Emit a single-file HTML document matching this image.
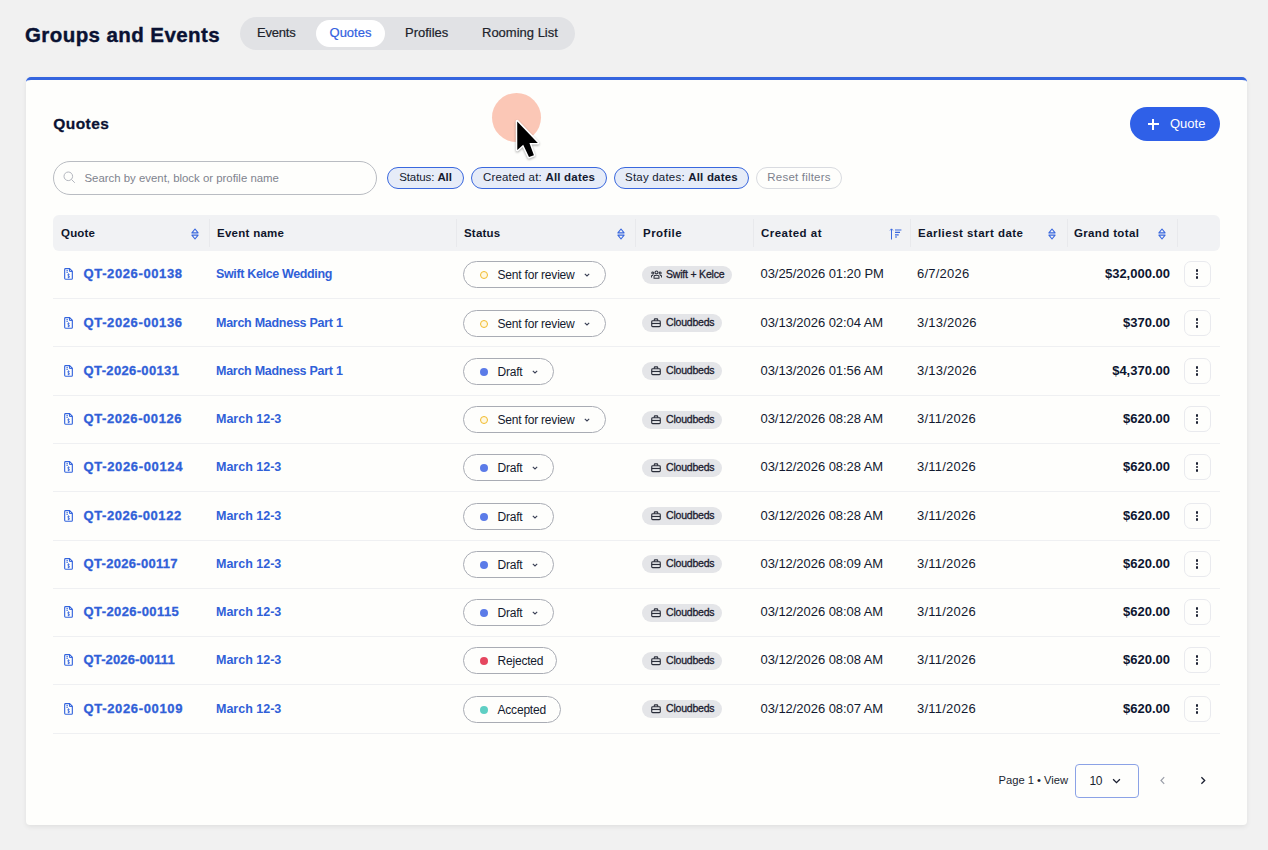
<!DOCTYPE html>
<html lang="en"><head><meta charset="utf-8"><title>Groups and Events - Quotes</title>
<style>
*{box-sizing:border-box;margin:0;padding:0}
html,body{width:1268px;height:850px;overflow:hidden}
body{background:#f1f1f1;font-family:"Liberation Sans",sans-serif;color:#0c1530;position:relative}
.abs{position:absolute;white-space:nowrap}
h1{position:absolute;left:25px;top:20px;font-size:20.5px;line-height:30px;font-weight:700;letter-spacing:.42px;-webkit-text-stroke:.4px #0a1233;color:#0a1233;white-space:nowrap}
.tabs{position:absolute;left:240px;top:17px;width:335px;height:33px;border-radius:17px;background:#e1e2e5}
.tabs span{position:absolute;top:0;height:33px;line-height:32px;font-size:13px;color:#20232b;white-space:nowrap;-webkit-text-stroke:.2px currentColor}
.tabs .on{left:76px;top:3px;width:69px;height:27px;line-height:26px;border-radius:14px;background:#fff;color:#3361df;text-align:center}
.card{position:absolute;left:26px;top:77px;width:1221px;height:748px;background:#fefefc;border-radius:5px 5px 4px 4px;border-top:3px solid #3565df;box-shadow:0 2px 5px rgba(0,0,0,.07)}
h2{position:absolute;left:53.3px;top:113.5px;font-size:15.5px;line-height:20px;font-weight:700;color:#0a1233;letter-spacing:.42px;-webkit-text-stroke:.3px #0a1233}
.btn{position:absolute;left:1130px;top:107px;width:90px;height:34px;border-radius:17px;background:#2f60e8;color:#fff;font-size:13px;line-height:34px}
.btn b{position:absolute;left:17.5px;top:11.5px;width:11px;height:11px}
.btn b:before{content:"";position:absolute;left:0;top:4.6px;width:11px;height:1.8px;background:#fff}
.btn b:after{content:"";position:absolute;left:4.6px;top:0;width:1.8px;height:11px;background:#fff}
.btn span{position:absolute;left:40px;top:0}
.search{position:absolute;left:53px;top:161px;width:324px;height:34px;border-radius:17px;border:1px solid #b9bcc2;background:#fefefc}
.search span{position:absolute;left:30.5px;top:1px;line-height:31px;font-size:11.4px;color:#7e838e}
.search svg{position:absolute;left:9.2px;top:9.1px}
.chip{position:absolute;top:166.5px;height:22.5px;border-radius:12px;border:1px solid #3a68de;background:#e6ecf8;font-size:11.5px;letter-spacing:.2px;line-height:19.5px;color:#141a30;text-align:center;white-space:nowrap}
.chip b{font-weight:700}
.chip.off{border-color:#d9dbe0;background:#fefefc;color:#7d828d}
.thead{position:absolute;left:53px;top:215px;width:1167px;height:35.7px;background:#f1f2f4;border-radius:6px}
.thead span{position:absolute;top:1px;line-height:35px;font-size:11.5px;font-weight:700;letter-spacing:.2px;color:#10162c;white-space:nowrap}
.thead i{position:absolute;top:4px;width:1px;height:28px;background:#e8e9ec}
.thead svg{position:absolute;top:12.5px}
.row{position:absolute;left:53px;width:1167px;height:48px}
.sep{position:absolute;left:53px;width:1167px;height:1px;background:#eff0f2}
.row>*{position:absolute;white-space:nowrap}
.qi{left:11px;top:18.1px}
.q{left:30.6px;top:14px;line-height:20px;font-size:13px;font-weight:700;color:#3060d8;-webkit-text-stroke:.3px #3060d8;letter-spacing:.62px}
.ev{left:163px;top:14px;line-height:20px;font-size:12.5px;font-weight:700;color:#3060d8;letter-spacing:-.3px}
.st{left:410px;top:11px;height:27px;border:1px solid #a9acb4;border-radius:14px;background:#fefefc}
.st>*{position:absolute}
.dot{left:16px;top:9px;width:8px;height:8px;border-radius:50%}
.dot.ring{border:1.5px solid #f2bb2e;background:#fff8e0}
.stl{left:33.5px;top:0;line-height:26px;font-size:12px;letter-spacing:-.2px;color:#141a2e}
.caret{right:15px;top:11px}
.pf{left:589px;top:15px;letter-spacing:-.2px;height:18px;border-radius:9px;background:#e4e5e8;font-size:10.5px;font-weight:400;color:#1c2030}
.pf>*{position:absolute}
.pf .pi{left:8.5px;top:4px}
.pf span{left:24px;top:-1px;line-height:18px;-webkit-text-stroke:.3px #1c2030}
.cr{left:707.5px;top:14px;line-height:20px;font-size:13px;letter-spacing:-.05px;color:#131a30}
.sd{left:864px;top:14px;line-height:20px;font-size:13px;letter-spacing:.22px;color:#131a30}
.gt{right:50px;top:14px;line-height:20px;font-size:13px;font-weight:700;color:#0c1530}
.act{left:1131px;top:11px;width:26.6px;height:26px;border:1px solid #e9eaee;border-radius:7px;background:#fefefc}
.act i{position:absolute;left:11.3px;width:2.2px;height:2.2px;border-radius:50%;background:#1a1f30}
.act i:nth-child(1){top:7.4px}.act i:nth-child(2){top:10.9px}.act i:nth-child(3){top:14.4px}
.pg{position:absolute;left:998.5px;top:770px;font-size:11.2px;line-height:20px;color:#1a1f30;white-space:nowrap}
.sel{position:absolute;left:1075px;top:764px;width:64px;height:34px;border:1px solid #8ba2e6;border-radius:4px;background:#fefefc}
.sel span{position:absolute;left:13.5px;top:0;line-height:32px;font-size:12px;letter-spacing:-.3px;color:#1a1f30}
.sel svg{position:absolute;left:36px;top:12.5px}
.cursor{position:absolute;left:492px;top:92.5px;width:49px;height:49px;border-radius:50%;background:#fbc7b6}
</style></head><body>
<h1>Groups and Events</h1>
<div class="tabs"><span style="left:17px;letter-spacing:-.2px">Events</span><span class="on">Quotes</span><span style="left:165px">Profiles</span><span style="left:242px">Rooming List</span></div>
<div class="card"></div>
<h2>Quotes</h2>
<div class="btn"><b></b><span>Quote</span></div>
<div class="search"><svg width="13" height="13" viewBox="0 0 13 13"><circle cx="5.3" cy="5.3" r="4.3" fill="none" stroke="#b3b6be" stroke-width="1"/><path d="M8.4 8.4 L11.8 11.8" stroke="#b3b6be" stroke-width="1"/></svg><span>Search by event, block or profile name</span></div>
<div class="chip" style="left:387px;width:77px;letter-spacing:-.1px">Status: <b>All</b></div>
<div class="chip" style="left:471px;width:136px">Created at: <b>All dates</b></div>
<div class="chip" style="left:614px;width:135px">Stay dates: <b>All dates</b></div>
<div class="chip off" style="left:756px;width:86px">Reset filters</div>
<div class="thead">
<span style="left:8px">Quote</span><span style="left:164px;letter-spacing:0.27px">Event name</span><span style="left:411px">Status</span><span style="left:590px;letter-spacing:0.47px">Profile</span><span style="left:708px;letter-spacing:0.47px">Created at</span><span style="left:865px;letter-spacing:0.47px">Earliest start date</span><span style="left:1021px;letter-spacing:0.35px">Grand total</span>
<i style="left:156px"></i><i style="left:403px"></i><i style="left:582px"></i><i style="left:700px"></i><i style="left:857px"></i><i style="left:1014px"></i><i style="left:1124px"></i>
<svg style="left:137.5px" width="8" height="12" viewBox="0 0 8 12"><g fill="none" stroke="#3a68de" stroke-width="1.1" stroke-linejoin="round"><path d="M0.9 4.9 L4 1 L7.1 4.9 Z"/><path d="M0.9 7.1 L4 11 L7.1 7.1 Z"/></g></svg><svg style="left:563.5px" width="8" height="12" viewBox="0 0 8 12"><g fill="none" stroke="#3a68de" stroke-width="1.1" stroke-linejoin="round"><path d="M0.9 4.9 L4 1 L7.1 4.9 Z"/><path d="M0.9 7.1 L4 11 L7.1 7.1 Z"/></g></svg><svg style="left:994.5px" width="8" height="12" viewBox="0 0 8 12"><g fill="none" stroke="#3a68de" stroke-width="1.1" stroke-linejoin="round"><path d="M0.9 4.9 L4 1 L7.1 4.9 Z"/><path d="M0.9 7.1 L4 11 L7.1 7.1 Z"/></g></svg><svg style="left:1104.5px" width="8" height="12" viewBox="0 0 8 12"><g fill="none" stroke="#3a68de" stroke-width="1.1" stroke-linejoin="round"><path d="M0.9 4.9 L4 1 L7.1 4.9 Z"/><path d="M0.9 7.1 L4 11 L7.1 7.1 Z"/></g></svg><svg style="left:836px" width="14" height="12" viewBox="0 0 14 12"><g fill="none" stroke="#3a68de"><path d="M2.5 11.5 V0.9 M1.1 2.4 L2.5 0.9 L3.9 2.4" stroke-width="1"/><path d="M6 2 H12.4 M6 4.3 H11 M6 6.9 H9.7 M6 9 H8" stroke-width="1.2"/></g></svg>
</div>
<div class="row" style="top:250px">
<svg class="qi" width="9" height="11.8" viewBox="0 0 9 12"><g fill="none" stroke="#3364dd"><path d="M1.5 0.6 H5.6 L8.4 3.4 V10.6 Q8.4 11.4 7.6 11.4 H1.5 Q0.6 11.4 0.6 10.5 V1.5 Q0.6 0.6 1.5 0.6 Z" stroke-width="1.15"/><path d="M5.5 0.9 V3.5 H8.1" stroke-width="1"/><path d="M2.3 2.7 H4 M2.3 4.4 H4" stroke-width=".9"/><path d="M5.6 6.7 Q4.6 5.9 3.8 6.6 Q3.3 7.5 4.6 8 Q6 8.5 5.4 9.4 Q4.6 10 3.6 9.3 M4.6 5.5 V10.4" stroke-width=".8"/></g></svg>
<span class="q" style="letter-spacing:0.61px">QT-2026-00138</span><span class="ev" style="letter-spacing:-0.35px">Swift Kelce Wedding</span>
<span class="st" style="width:143px"><i class="dot ring"></i><span class="stl">Sent for review</span><svg class="caret" width="6" height="4" viewBox="0 0 6 4"><path d="M0.8 0.8 L3 3 L5.2 0.8" fill="none" stroke="#3a4055" stroke-width="1.1"/></svg></span>
<span class="pf" style="width:90px;top:16px"><svg class="pi" width="11" height="9.2" viewBox="0 0 12 10"><g fill="none" stroke="#2a2e3a" stroke-width="1.1"><circle cx="6" cy="2.6" r="1.6"/><circle cx="2" cy="3.2" r="1.1"/><circle cx="10" cy="3.2" r="1.1"/><path d="M3.3 9 V7.2 Q3.3 5.6 6 5.6 Q8.7 5.6 8.7 7.2 V9 Z"/><path d="M0.5 8.2 V6.6 Q0.5 5.6 2.4 5.6 M11.5 8.2 V6.6 Q11.5 5.6 9.6 5.6"/></g></svg><span>Swift + Kelce</span></span>
<span class="cr">03/25/2026 01:20 PM</span><span class="sd">6/7/2026</span><span class="gt">$32,000.00</span>
<span class="act"><i></i><i></i><i></i></span>
</div>
<div class="row" style="top:299px">
<svg class="qi" width="9" height="11.8" viewBox="0 0 9 12"><g fill="none" stroke="#3364dd"><path d="M1.5 0.6 H5.6 L8.4 3.4 V10.6 Q8.4 11.4 7.6 11.4 H1.5 Q0.6 11.4 0.6 10.5 V1.5 Q0.6 0.6 1.5 0.6 Z" stroke-width="1.15"/><path d="M5.5 0.9 V3.5 H8.1" stroke-width="1"/><path d="M2.3 2.7 H4 M2.3 4.4 H4" stroke-width=".9"/><path d="M5.6 6.7 Q4.6 5.9 3.8 6.6 Q3.3 7.5 4.6 8 Q6 8.5 5.4 9.4 Q4.6 10 3.6 9.3 M4.6 5.5 V10.4" stroke-width=".8"/></g></svg>
<span class="q" style="letter-spacing:0.61px">QT-2026-00136</span><span class="ev" style="letter-spacing:-0.27px">March Madness Part 1</span>
<span class="st" style="width:143px"><i class="dot ring"></i><span class="stl">Sent for review</span><svg class="caret" width="6" height="4" viewBox="0 0 6 4"><path d="M0.8 0.8 L3 3 L5.2 0.8" fill="none" stroke="#3a4055" stroke-width="1.1"/></svg></span>
<span class="pf" style="width:80px;top:15px"><svg class="pi" width="10" height="9.5" viewBox="0 0 11 10"><g fill="none" stroke="#2a2e3a" stroke-width="1.25"><rect x="0.8" y="2.8" width="9.4" height="6.4" rx="1"/><path d="M3.6 2.8 V1.6 Q3.6 0.8 4.4 0.8 H6.6 Q7.4 0.8 7.4 1.6 V2.8"/><path d="M0.8 5.8 H10.2"/></g></svg><span>Cloudbeds</span></span>
<span class="cr">03/13/2026 02:04 AM</span><span class="sd">3/13/2026</span><span class="gt">$370.00</span>
<span class="act"><i></i><i></i><i></i></span>
</div>
<div class="row" style="top:347px">
<svg class="qi" width="9" height="11.8" viewBox="0 0 9 12"><g fill="none" stroke="#3364dd"><path d="M1.5 0.6 H5.6 L8.4 3.4 V10.6 Q8.4 11.4 7.6 11.4 H1.5 Q0.6 11.4 0.6 10.5 V1.5 Q0.6 0.6 1.5 0.6 Z" stroke-width="1.15"/><path d="M5.5 0.9 V3.5 H8.1" stroke-width="1"/><path d="M2.3 2.7 H4 M2.3 4.4 H4" stroke-width=".9"/><path d="M5.6 6.7 Q4.6 5.9 3.8 6.6 Q3.3 7.5 4.6 8 Q6 8.5 5.4 9.4 Q4.6 10 3.6 9.3 M4.6 5.5 V10.4" stroke-width=".8"/></g></svg>
<span class="q" style="letter-spacing:0.35px">QT-2026-00131</span><span class="ev" style="letter-spacing:-0.27px">March Madness Part 1</span>
<span class="st" style="width:91px"><i class="dot" style="background:#5b7be8"></i><span class="stl">Draft</span><svg class="caret" width="6" height="4" viewBox="0 0 6 4"><path d="M0.8 0.8 L3 3 L5.2 0.8" fill="none" stroke="#3a4055" stroke-width="1.1"/></svg></span>
<span class="pf" style="width:80px;top:15px"><svg class="pi" width="10" height="9.5" viewBox="0 0 11 10"><g fill="none" stroke="#2a2e3a" stroke-width="1.25"><rect x="0.8" y="2.8" width="9.4" height="6.4" rx="1"/><path d="M3.6 2.8 V1.6 Q3.6 0.8 4.4 0.8 H6.6 Q7.4 0.8 7.4 1.6 V2.8"/><path d="M0.8 5.8 H10.2"/></g></svg><span>Cloudbeds</span></span>
<span class="cr">03/13/2026 01:56 AM</span><span class="sd">3/13/2026</span><span class="gt">$4,370.00</span>
<span class="act"><i></i><i></i><i></i></span>
</div>
<div class="row" style="top:395px">
<svg class="qi" width="9" height="11.8" viewBox="0 0 9 12"><g fill="none" stroke="#3364dd"><path d="M1.5 0.6 H5.6 L8.4 3.4 V10.6 Q8.4 11.4 7.6 11.4 H1.5 Q0.6 11.4 0.6 10.5 V1.5 Q0.6 0.6 1.5 0.6 Z" stroke-width="1.15"/><path d="M5.5 0.9 V3.5 H8.1" stroke-width="1"/><path d="M2.3 2.7 H4 M2.3 4.4 H4" stroke-width=".9"/><path d="M5.6 6.7 Q4.6 5.9 3.8 6.6 Q3.3 7.5 4.6 8 Q6 8.5 5.4 9.4 Q4.6 10 3.6 9.3 M4.6 5.5 V10.4" stroke-width=".8"/></g></svg>
<span class="q" style="letter-spacing:0.57px">QT-2026-00126</span><span class="ev" style="letter-spacing:0px">March 12-3</span>
<span class="st" style="width:143px"><i class="dot ring"></i><span class="stl">Sent for review</span><svg class="caret" width="6" height="4" viewBox="0 0 6 4"><path d="M0.8 0.8 L3 3 L5.2 0.8" fill="none" stroke="#3a4055" stroke-width="1.1"/></svg></span>
<span class="pf" style="width:80px;top:16px"><svg class="pi" width="10" height="9.5" viewBox="0 0 11 10"><g fill="none" stroke="#2a2e3a" stroke-width="1.25"><rect x="0.8" y="2.8" width="9.4" height="6.4" rx="1"/><path d="M3.6 2.8 V1.6 Q3.6 0.8 4.4 0.8 H6.6 Q7.4 0.8 7.4 1.6 V2.8"/><path d="M0.8 5.8 H10.2"/></g></svg><span>Cloudbeds</span></span>
<span class="cr">03/12/2026 08:28 AM</span><span class="sd">3/11/2026</span><span class="gt">$620.00</span>
<span class="act"><i></i><i></i><i></i></span>
</div>
<div class="row" style="top:443px">
<svg class="qi" width="9" height="11.8" viewBox="0 0 9 12"><g fill="none" stroke="#3364dd"><path d="M1.5 0.6 H5.6 L8.4 3.4 V10.6 Q8.4 11.4 7.6 11.4 H1.5 Q0.6 11.4 0.6 10.5 V1.5 Q0.6 0.6 1.5 0.6 Z" stroke-width="1.15"/><path d="M5.5 0.9 V3.5 H8.1" stroke-width="1"/><path d="M2.3 2.7 H4 M2.3 4.4 H4" stroke-width=".9"/><path d="M5.6 6.7 Q4.6 5.9 3.8 6.6 Q3.3 7.5 4.6 8 Q6 8.5 5.4 9.4 Q4.6 10 3.6 9.3 M4.6 5.5 V10.4" stroke-width=".8"/></g></svg>
<span class="q" style="letter-spacing:0.65px">QT-2026-00124</span><span class="ev" style="letter-spacing:0px">March 12-3</span>
<span class="st" style="width:91px"><i class="dot" style="background:#5b7be8"></i><span class="stl">Draft</span><svg class="caret" width="6" height="4" viewBox="0 0 6 4"><path d="M0.8 0.8 L3 3 L5.2 0.8" fill="none" stroke="#3a4055" stroke-width="1.1"/></svg></span>
<span class="pf" style="width:80px;top:16px"><svg class="pi" width="10" height="9.5" viewBox="0 0 11 10"><g fill="none" stroke="#2a2e3a" stroke-width="1.25"><rect x="0.8" y="2.8" width="9.4" height="6.4" rx="1"/><path d="M3.6 2.8 V1.6 Q3.6 0.8 4.4 0.8 H6.6 Q7.4 0.8 7.4 1.6 V2.8"/><path d="M0.8 5.8 H10.2"/></g></svg><span>Cloudbeds</span></span>
<span class="cr">03/12/2026 08:28 AM</span><span class="sd">3/11/2026</span><span class="gt">$620.00</span>
<span class="act"><i></i><i></i><i></i></span>
</div>
<div class="row" style="top:492px">
<svg class="qi" width="9" height="11.8" viewBox="0 0 9 12"><g fill="none" stroke="#3364dd"><path d="M1.5 0.6 H5.6 L8.4 3.4 V10.6 Q8.4 11.4 7.6 11.4 H1.5 Q0.6 11.4 0.6 10.5 V1.5 Q0.6 0.6 1.5 0.6 Z" stroke-width="1.15"/><path d="M5.5 0.9 V3.5 H8.1" stroke-width="1"/><path d="M2.3 2.7 H4 M2.3 4.4 H4" stroke-width=".9"/><path d="M5.6 6.7 Q4.6 5.9 3.8 6.6 Q3.3 7.5 4.6 8 Q6 8.5 5.4 9.4 Q4.6 10 3.6 9.3 M4.6 5.5 V10.4" stroke-width=".8"/></g></svg>
<span class="q" style="letter-spacing:0.54px">QT-2026-00122</span><span class="ev" style="letter-spacing:0px">March 12-3</span>
<span class="st" style="width:91px"><i class="dot" style="background:#5b7be8"></i><span class="stl">Draft</span><svg class="caret" width="6" height="4" viewBox="0 0 6 4"><path d="M0.8 0.8 L3 3 L5.2 0.8" fill="none" stroke="#3a4055" stroke-width="1.1"/></svg></span>
<span class="pf" style="width:80px;top:15px"><svg class="pi" width="10" height="9.5" viewBox="0 0 11 10"><g fill="none" stroke="#2a2e3a" stroke-width="1.25"><rect x="0.8" y="2.8" width="9.4" height="6.4" rx="1"/><path d="M3.6 2.8 V1.6 Q3.6 0.8 4.4 0.8 H6.6 Q7.4 0.8 7.4 1.6 V2.8"/><path d="M0.8 5.8 H10.2"/></g></svg><span>Cloudbeds</span></span>
<span class="cr">03/12/2026 08:28 AM</span><span class="sd">3/11/2026</span><span class="gt">$620.00</span>
<span class="act"><i></i><i></i><i></i></span>
</div>
<div class="row" style="top:540px">
<svg class="qi" width="9" height="11.8" viewBox="0 0 9 12"><g fill="none" stroke="#3364dd"><path d="M1.5 0.6 H5.6 L8.4 3.4 V10.6 Q8.4 11.4 7.6 11.4 H1.5 Q0.6 11.4 0.6 10.5 V1.5 Q0.6 0.6 1.5 0.6 Z" stroke-width="1.15"/><path d="M5.5 0.9 V3.5 H8.1" stroke-width="1"/><path d="M2.3 2.7 H4 M2.3 4.4 H4" stroke-width=".9"/><path d="M5.6 6.7 Q4.6 5.9 3.8 6.6 Q3.3 7.5 4.6 8 Q6 8.5 5.4 9.4 Q4.6 10 3.6 9.3 M4.6 5.5 V10.4" stroke-width=".8"/></g></svg>
<span class="q" style="letter-spacing:0.30px">QT-2026-00117</span><span class="ev" style="letter-spacing:0px">March 12-3</span>
<span class="st" style="width:91px"><i class="dot" style="background:#5b7be8"></i><span class="stl">Draft</span><svg class="caret" width="6" height="4" viewBox="0 0 6 4"><path d="M0.8 0.8 L3 3 L5.2 0.8" fill="none" stroke="#3a4055" stroke-width="1.1"/></svg></span>
<span class="pf" style="width:80px;top:15px"><svg class="pi" width="10" height="9.5" viewBox="0 0 11 10"><g fill="none" stroke="#2a2e3a" stroke-width="1.25"><rect x="0.8" y="2.8" width="9.4" height="6.4" rx="1"/><path d="M3.6 2.8 V1.6 Q3.6 0.8 4.4 0.8 H6.6 Q7.4 0.8 7.4 1.6 V2.8"/><path d="M0.8 5.8 H10.2"/></g></svg><span>Cloudbeds</span></span>
<span class="cr">03/12/2026 08:09 AM</span><span class="sd">3/11/2026</span><span class="gt">$620.00</span>
<span class="act"><i></i><i></i><i></i></span>
</div>
<div class="row" style="top:588px">
<svg class="qi" width="9" height="11.8" viewBox="0 0 9 12"><g fill="none" stroke="#3364dd"><path d="M1.5 0.6 H5.6 L8.4 3.4 V10.6 Q8.4 11.4 7.6 11.4 H1.5 Q0.6 11.4 0.6 10.5 V1.5 Q0.6 0.6 1.5 0.6 Z" stroke-width="1.15"/><path d="M5.5 0.9 V3.5 H8.1" stroke-width="1"/><path d="M2.3 2.7 H4 M2.3 4.4 H4" stroke-width=".9"/><path d="M5.6 6.7 Q4.6 5.9 3.8 6.6 Q3.3 7.5 4.6 8 Q6 8.5 5.4 9.4 Q4.6 10 3.6 9.3 M4.6 5.5 V10.4" stroke-width=".8"/></g></svg>
<span class="q" style="letter-spacing:0.40px">QT-2026-00115</span><span class="ev" style="letter-spacing:0px">March 12-3</span>
<span class="st" style="width:91px"><i class="dot" style="background:#5b7be8"></i><span class="stl">Draft</span><svg class="caret" width="6" height="4" viewBox="0 0 6 4"><path d="M0.8 0.8 L3 3 L5.2 0.8" fill="none" stroke="#3a4055" stroke-width="1.1"/></svg></span>
<span class="pf" style="width:80px;top:16px"><svg class="pi" width="10" height="9.5" viewBox="0 0 11 10"><g fill="none" stroke="#2a2e3a" stroke-width="1.25"><rect x="0.8" y="2.8" width="9.4" height="6.4" rx="1"/><path d="M3.6 2.8 V1.6 Q3.6 0.8 4.4 0.8 H6.6 Q7.4 0.8 7.4 1.6 V2.8"/><path d="M0.8 5.8 H10.2"/></g></svg><span>Cloudbeds</span></span>
<span class="cr">03/12/2026 08:08 AM</span><span class="sd">3/11/2026</span><span class="gt">$620.00</span>
<span class="act"><i></i><i></i><i></i></span>
</div>
<div class="row" style="top:636px">
<svg class="qi" width="9" height="11.8" viewBox="0 0 9 12"><g fill="none" stroke="#3364dd"><path d="M1.5 0.6 H5.6 L8.4 3.4 V10.6 Q8.4 11.4 7.6 11.4 H1.5 Q0.6 11.4 0.6 10.5 V1.5 Q0.6 0.6 1.5 0.6 Z" stroke-width="1.15"/><path d="M5.5 0.9 V3.5 H8.1" stroke-width="1"/><path d="M2.3 2.7 H4 M2.3 4.4 H4" stroke-width=".9"/><path d="M5.6 6.7 Q4.6 5.9 3.8 6.6 Q3.3 7.5 4.6 8 Q6 8.5 5.4 9.4 Q4.6 10 3.6 9.3 M4.6 5.5 V10.4" stroke-width=".8"/></g></svg>
<span class="q" style="letter-spacing:0.12px">QT-2026-00111</span><span class="ev" style="letter-spacing:0px">March 12-3</span>
<span class="st" style="width:94px"><i class="dot" style="background:#e5475f"></i><span class="stl">Rejected</span></span>
<span class="pf" style="width:80px;top:16px"><svg class="pi" width="10" height="9.5" viewBox="0 0 11 10"><g fill="none" stroke="#2a2e3a" stroke-width="1.25"><rect x="0.8" y="2.8" width="9.4" height="6.4" rx="1"/><path d="M3.6 2.8 V1.6 Q3.6 0.8 4.4 0.8 H6.6 Q7.4 0.8 7.4 1.6 V2.8"/><path d="M0.8 5.8 H10.2"/></g></svg><span>Cloudbeds</span></span>
<span class="cr">03/12/2026 08:08 AM</span><span class="sd">3/11/2026</span><span class="gt">$620.00</span>
<span class="act"><i></i><i></i><i></i></span>
</div>
<div class="row" style="top:685px">
<svg class="qi" width="9" height="11.8" viewBox="0 0 9 12"><g fill="none" stroke="#3364dd"><path d="M1.5 0.6 H5.6 L8.4 3.4 V10.6 Q8.4 11.4 7.6 11.4 H1.5 Q0.6 11.4 0.6 10.5 V1.5 Q0.6 0.6 1.5 0.6 Z" stroke-width="1.15"/><path d="M5.5 0.9 V3.5 H8.1" stroke-width="1"/><path d="M2.3 2.7 H4 M2.3 4.4 H4" stroke-width=".9"/><path d="M5.6 6.7 Q4.6 5.9 3.8 6.6 Q3.3 7.5 4.6 8 Q6 8.5 5.4 9.4 Q4.6 10 3.6 9.3 M4.6 5.5 V10.4" stroke-width=".8"/></g></svg>
<span class="q" style="letter-spacing:0.65px">QT-2026-00109</span><span class="ev" style="letter-spacing:0px">March 12-3</span>
<span class="st" style="width:98px"><i class="dot" style="background:#5fcfc4"></i><span class="stl">Accepted</span></span>
<span class="pf" style="width:80px;top:15px"><svg class="pi" width="10" height="9.5" viewBox="0 0 11 10"><g fill="none" stroke="#2a2e3a" stroke-width="1.25"><rect x="0.8" y="2.8" width="9.4" height="6.4" rx="1"/><path d="M3.6 2.8 V1.6 Q3.6 0.8 4.4 0.8 H6.6 Q7.4 0.8 7.4 1.6 V2.8"/><path d="M0.8 5.8 H10.2"/></g></svg><span>Cloudbeds</span></span>
<span class="cr">03/12/2026 08:07 AM</span><span class="sd">3/11/2026</span><span class="gt">$620.00</span>
<span class="act"><i></i><i></i><i></i></span>
</div>
<div class="sep" style="top:298px"></div>
<div class="sep" style="top:346px"></div>
<div class="sep" style="top:395px"></div>
<div class="sep" style="top:443px"></div>
<div class="sep" style="top:491px"></div>
<div class="sep" style="top:540px"></div>
<div class="sep" style="top:588px"></div>
<div class="sep" style="top:636px"></div>
<div class="sep" style="top:684px"></div>
<div class="sep" style="top:733px"></div>
<div class="pg">Page 1 • View</div>
<div class="sel"><span>10</span><svg width="9" height="6" viewBox="0 0 9 6"><path d="M1.1 1.2 L4.5 4.6 L7.9 1.2" fill="none" stroke="#1a1f30" stroke-width="1.3"/></svg></div>
<svg class="abs" style="left:1159px;top:776px" width="8" height="9" viewBox="0 0 8 9"><path d="M5.2 1.2 L2 4.5 L5.2 7.8" fill="none" stroke="#9a9ea8" stroke-width="1.2"/></svg>
<svg class="abs" style="left:1199px;top:775.5px" width="8" height="9" viewBox="0 0 8 9"><path d="M2.4 1.2 L5.7 4.5 L2.4 7.8" fill="none" stroke="#1a1f30" stroke-width="1.3"/></svg>
<div class="cursor"></div>
<svg class="abs" style="left:0;top:0;filter:drop-shadow(0 1px 1px rgba(0,0,0,.35))" width="1268" height="200" viewBox="0 0 1268 200"><path d="M517.2 121.4 L517.3 150 L523.2 144.7 L529 157 L533.9 155.2 L529.4 142.9 L537.8 142.9 Z" fill="#000" stroke="#fff" stroke-width="3" stroke-linejoin="round" paint-order="stroke"/></svg>
</body></html>
